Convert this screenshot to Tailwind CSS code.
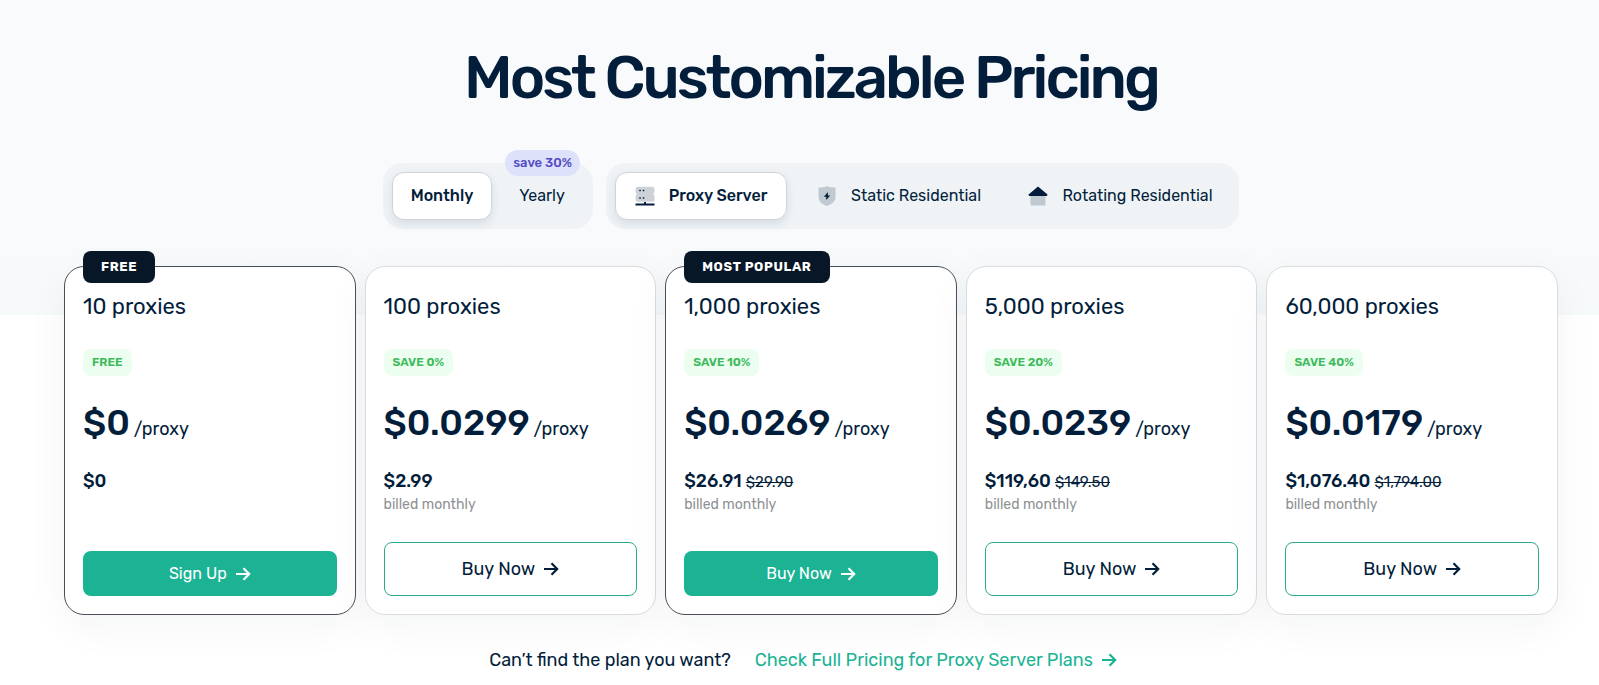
<!DOCTYPE html>
<html lang="en">
<head>
<meta charset="utf-8">
<meta name="viewport" content="width=device-width, initial-scale=1">
<title>Most Customizable Pricing</title>
<script src="https://cdn.jsdelivr.net/npm/@tailwindcss/browser@4"></script>
</head>
<body class="bg-white font-[Rubik,Roboto,sans-serif] text-[#031e3b]">
<svg class="hidden" aria-hidden="true">
  <symbol id="arrow" viewBox="0 0 16 16"><path d="M1 8h13M8.500 2.200 14.200 8l-5.700 5.800" fill="none" stroke="currentColor" stroke-width="2.200"/></symbol>
</svg>
<main class="min-h-screen bg-[linear-gradient(#f8fafc_0,#f8fafc_240px,#f7fafb_315px,#fff_315px)] pl-16 pr-[41px] pt-10">
  <h1 class="text-center text-[60px] leading-[75px] font-medium tracking-tighter">Most Customizable Pricing</h1>

  <div class="mt-12 flex justify-center gap-[13px]">
    <div class="relative flex gap-2 rounded-[20px] bg-[#eff3f6] p-[9px]" role="group" aria-label="Billing period">
      <button class="h-12 w-[100px] rounded-xl border border-[#cfd4da] bg-white text-base font-medium shadow-[0_4px_10px_rgba(20,40,60,0.10)]" aria-pressed="true">Monthly</button>
      <button class="h-12 w-[84px] text-base" aria-pressed="false">Yearly</button>
      <span class="absolute -top-[13px] right-[13px] rounded-full bg-[#dde1fa] px-2 text-[13px] leading-[26px] font-medium text-[#544bc4]">save 30%</span>
    </div>
    <div class="flex gap-2 rounded-[20px] bg-[#eff3f6] p-[9px]" role="group" aria-label="Proxy type">
      <button class="flex h-12 w-[172px] items-center justify-center gap-[14px] rounded-xl border border-[#cfd4da] bg-white text-base font-medium shadow-[0_4px_10px_rgba(20,40,60,0.10)]" aria-pressed="true">
        <svg class="size-5" viewBox="0 0 20 20"><path d="M3 .8h14a2.500 2.500 0 0 1 2.500 2.500v2.500L18.300 8l1.200 2.200v3A2.500 2.500 0 0 1 17 15.800H3A2.500 2.500 0 0 1 .5 13.300v-3L1.700 8 .5 5.800V3.300A2.500 2.500 0 0 1 3 .8z" fill="#cdd2d8"/><path d="M4.300 4.500h1.500M7.800 4.500h1.500M4.300 12h1.500M7.800 12h1.500" stroke="#041c3b" stroke-width="1.500"/><path d="M10 16v2M.5 18.500h19" stroke="#041c3b" stroke-width="2"/></svg>
        Proxy Server
      </button>
      <button class="flex h-12 w-[208px] items-center justify-center gap-[14px] text-base" aria-pressed="false">
        <svg class="size-5" viewBox="0 0 20 20"><path d="M10 0C12 1 15 1.500 18.500 1.500V11c0 4-3.500 7.500-8.500 9C5 18.500 1.500 15 1.500 11V1.500C5 1.500 8 1 10 0z" fill="#c0c8d0"/><path d="M11 6 6.800 10.800h2.400v3.200L13.200 9.500h-2.400z" fill="#041c3b"/></svg>
        Static Residential
      </button>
      <button class="flex h-12 w-[219px] items-center justify-center gap-[14px] text-base" aria-pressed="false">
        <svg class="size-5" viewBox="0 0 20 20"><path d="M2.500 9h15v9.500a1 1 0 0 1-1 1h-13a1 1 0 0 1-1-1z" fill="#c0c8d0"/><path d="M10 .5 19.500 8.500 19 10H1L.5 8.500z" fill="#041c3b"/></svg>
        Rotating Residential
      </button>
    </div>
  </div>

  <div class="mt-[37px] grid grid-cols-5 gap-[9px]">
    <section class="relative flex min-h-[349px] flex-col rounded-[20px] border border-[#4a4f57] bg-white p-[18px] shadow-[0_10px_40px_rgba(20,40,60,0.05)]">
      <span class="absolute -top-4 left-[18px] rounded-lg bg-[#071727] px-[18px] text-[13px] leading-8 font-bold tracking-wider text-white">FREE</span>
      <h2 class="mt-[6px] text-[22px] leading-8">10 proxies</h2>
      <span class="mt-[26px] self-start rounded-lg bg-[#ebfef0] px-[9px] text-xs leading-[27px] font-semibold text-[#3dba5b]">FREE</span>
      <p class="mt-5 leading-[54px]"><span class="text-4xl leading-[54px] font-medium">$0</span> <span class="text-lg">/proxy</span></p>
      <p class="mt-[10px] text-lg leading-7 font-medium">$0</p>
      <button class="mt-auto flex h-[45px] items-center justify-center gap-2 rounded-lg bg-[#1bb394] text-base text-white">Sign Up <svg class="size-4"><use href="#arrow"/></svg></button>
    </section>

    <section class="relative flex min-h-[349px] flex-col rounded-[20px] border border-[#d8dce0] bg-white p-[18px] shadow-[0_10px_40px_rgba(20,40,60,0.05)]">
      <h2 class="mt-[6px] text-[22px] leading-8">100 proxies</h2>
      <span class="mt-[26px] self-start rounded-lg bg-[#ebfef0] px-[9px] text-xs leading-[27px] font-semibold text-[#3dba5b]">SAVE 0%</span>
      <p class="mt-5 leading-[54px]"><span class="text-4xl leading-[54px] font-medium">$0.0299</span> <span class="text-lg">/proxy</span></p>
      <p class="mt-[10px] text-lg leading-7 font-medium">$2.99</p>
      <p class="text-sm leading-5 text-[#8e9194]">billed monthly</p>
      <button class="mt-auto flex h-[54px] items-center justify-center gap-2 rounded-lg border border-[#2aa98c] bg-white text-lg">Buy Now <svg class="size-4"><use href="#arrow"/></svg></button>
    </section>

    <section class="relative flex min-h-[349px] flex-col rounded-[20px] border border-[#4a4f57] bg-white p-[18px] shadow-[0_10px_40px_rgba(20,40,60,0.05)]">
      <span class="absolute -top-4 left-[18px] rounded-lg bg-[#071727] px-[18px] text-[13px] leading-8 font-bold tracking-wider text-white">MOST POPULAR</span>
      <h2 class="mt-[6px] text-[22px] leading-8">1,000 proxies</h2>
      <span class="mt-[26px] self-start rounded-lg bg-[#ebfef0] px-[9px] text-xs leading-[27px] font-semibold text-[#3dba5b]">SAVE 10%</span>
      <p class="mt-5 leading-[54px]"><span class="text-4xl leading-[54px] font-medium">$0.0269</span> <span class="text-lg">/proxy</span></p>
      <p class="mt-[10px] text-lg leading-7 font-medium">$26.91 <s class="text-[15px] leading-none font-normal">$29.90</s></p>
      <p class="text-sm leading-5 text-[#8e9194]">billed monthly</p>
      <button class="mt-auto flex h-[45px] items-center justify-center gap-2 rounded-lg bg-[#1bb394] text-base text-white">Buy Now <svg class="size-4"><use href="#arrow"/></svg></button>
    </section>

    <section class="relative flex min-h-[349px] flex-col rounded-[20px] border border-[#d8dce0] bg-white p-[18px] shadow-[0_10px_40px_rgba(20,40,60,0.05)]">
      <h2 class="mt-[6px] text-[22px] leading-8">5,000 proxies</h2>
      <span class="mt-[26px] self-start rounded-lg bg-[#ebfef0] px-[9px] text-xs leading-[27px] font-semibold text-[#3dba5b]">SAVE 20%</span>
      <p class="mt-5 leading-[54px]"><span class="text-4xl leading-[54px] font-medium">$0.0239</span> <span class="text-lg">/proxy</span></p>
      <p class="mt-[10px] text-lg leading-7 font-medium">$119,60 <s class="text-[15px] leading-none font-normal">$149.50</s></p>
      <p class="text-sm leading-5 text-[#8e9194]">billed monthly</p>
      <button class="mt-auto flex h-[54px] items-center justify-center gap-2 rounded-lg border border-[#2aa98c] bg-white text-lg">Buy Now <svg class="size-4"><use href="#arrow"/></svg></button>
    </section>

    <section class="relative flex min-h-[349px] flex-col rounded-[20px] border border-[#d8dce0] bg-white p-[18px] shadow-[0_10px_40px_rgba(20,40,60,0.05)]">
      <h2 class="mt-[6px] text-[22px] leading-8">60,000 proxies</h2>
      <span class="mt-[26px] self-start rounded-lg bg-[#ebfef0] px-[9px] text-xs leading-[27px] font-semibold text-[#3dba5b]">SAVE 40%</span>
      <p class="mt-5 leading-[54px]"><span class="text-4xl leading-[54px] font-medium">$0.0179</span> <span class="text-lg">/proxy</span></p>
      <p class="mt-[10px] text-lg leading-7 font-medium">$1,076.40 <s class="text-[15px] leading-none font-normal">$1,794.00</s></p>
      <p class="text-sm leading-5 text-[#8e9194]">billed monthly</p>
      <button class="mt-auto flex h-[54px] items-center justify-center gap-2 rounded-lg border border-[#2aa98c] bg-white text-lg">Buy Now <svg class="size-4"><use href="#arrow"/></svg></button>
    </section>
  </div>

  <div class="mt-[31px] flex items-center justify-center gap-6 pr-4 text-lg leading-7">
    <p>Can’t find the plan you want?</p>
    <a href="#" class="flex items-center gap-2 text-[#1bb394]">Check Full Pricing for Proxy Server Plans <svg class="size-4"><use href="#arrow"/></svg></a>
  </div>
</main>
</body>
</html>
